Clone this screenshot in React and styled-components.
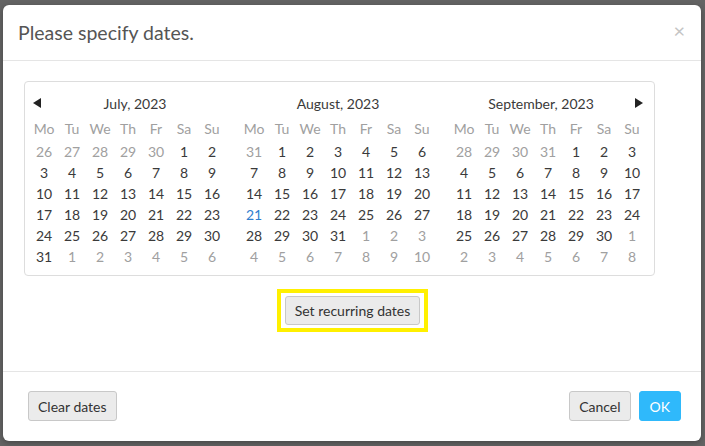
import styled, { createGlobalStyle } from "styled-components";

const GlobalStyle = createGlobalStyle`
    html, body {
        margin: 0;
        background: #646464;
        font-family: Lato, "Open Sans", sans-serif;
    }
`;

const Backdrop = styled.div`
    padding: 5px 4px 5px 3px;
    height: 446px;
    box-sizing: border-box;
`;

const Modal = styled.div`
    width: 698px;
    height: 436px;
    background: #fff;
    border-radius: 6px;
    display: flex;
    flex-direction: column;
    box-shadow: 0 2px 6px rgba(0, 0, 0, 0.3);
`;

const Header = styled.div`
    display: flex;
    align-items: center;
    justify-content: space-between;
    padding: 15px 15px 15px 15px;
    border-bottom: 1px solid #e5e5e5;
`;

const Title = styled.h4`
    margin: 0;
    font-size: 19.5px;
    line-height: 25px;
    font-weight: 400;
    color: #555;
`;

const Close = styled.span`
    font-size: 20px;
    line-height: 20px;
    color: #c4c4c4;
    margin-right: 1px;
    margin-top: -6px;
`;

const Body = styled.div`
    flex: 1;
    padding: 20px 0 0 21px;
    display: flex;
    flex-direction: column;
`;

const CalendarBox = styled.div`
    align-self: flex-start;
    display: flex;
    gap: 14px;
    padding: 8px 8px 8px 5px;
    border: 1px solid #ddd;
    border-radius: 4px;
`;

const Month = styled.div`
    width: 196px;
`;

const MonthHead = styled.div`
    display: flex;
    align-items: center;
    height: 26px;
`;

const Arrow = styled.span`
    width: 14px;
    display: flex;
    justify-content: center;
`;

const MonthName = styled.div`
    flex: 1;
    text-align: center;
    font-size: 14px;
    color: #3a3a3a;
`;

const Grid = styled.div`
    display: grid;
    grid-template-columns: repeat(7, 28px);
    grid-template-rows: 25px repeat(6, 21px);
    align-items: center;
`;

const Cell = styled.span`
    text-align: center;
    font-size: 14px;
    line-height: 21px;
    color: ${props => props.today ? "#2f7fcf" : props.muted ? "#a0a0a0" : "#3a3a3a"};
`;

const RecurRow = styled.div`
    display: flex;
    justify-content: center;
    margin-top: 13px;
    padding-right: 20px;
`;

const Highlight = styled.div`
    border: 4px solid #fff000;
    padding: 3px 4px;
`;

const Button = styled.button`
    height: ${props => props.tall ? "30px" : "29px"};
    padding: 0 ${props => props.pad || 9}px;
    font-family: Lato, "Open Sans", sans-serif;
    font-size: 14px;
    color: ${props => props.primary ? "#fff" : "#333"};
    background: ${props => props.primary ? "#2fb9fb" : "#ebebeb"};
    border: 1px solid ${props => props.primary ? "#2fb9fb" : "#c8c8c8"};
    border-radius: 3px;
    cursor: pointer;
`;

const Footer = styled.div`
    display: flex;
    align-items: center;
    padding: 19px 20px 20px 25px;
    border-top: 1px solid #e5e5e5;
`;

const Spacer = styled.div`
    flex: 1;
`;

const Actions = styled.div`
    display: flex;
    gap: 8px;
`;

const dayNames = ["Mo", "Tu", "We", "Th", "Fr", "Sa", "Su"];

const buildDays = (year, month) => {
    const first = new Date(year, month, 1);
    const offset = (first.getDay() + 6) % 7;
    const days = [];
    for (let i = 0; i < 42; i++) {
        const d = new Date(year, month, 1 - offset + i);
        days.push({
            n: d.getDate(),
            muted: d.getMonth() !== month,
            today: month === 7 && d.getMonth() === 7 && d.getDate() === 21,
        });
    }
    return days;
};

const months = [
    { name: "July, 2023", m: 6, prev: true },
    { name: "August, 2023", m: 7 },
    { name: "September, 2023", m: 8, next: true },
];

const LeftTri = () => (
    <svg width="8" height="10" viewBox="0 0 8 10"><path d="M8 0 L0 5 L8 10 Z" fill="#222" /></svg>
);
const RightTri = () => (
    <svg width="8" height="10" viewBox="0 0 8 10"><path d="M0 0 L8 5 L0 10 Z" fill="#222" /></svg>
);

const App = () => {
    return (
        <>
            <GlobalStyle />
            <Backdrop>
                <Modal>
                    <Header>
                        <Title>Please specify dates.</Title>
                        <Close>×</Close>
                    </Header>
                    <Body>
                        <CalendarBox>
                            {months.map(mo => (
                                <Month key={mo.name}>
                                    <MonthHead>
                                        {mo.prev && <Arrow><LeftTri /></Arrow>}
                                        <MonthName>{mo.name}</MonthName>
                                        {mo.next && <Arrow><RightTri /></Arrow>}
                                    </MonthHead>
                                    <Grid>
                                        {dayNames.map(d => <Cell key={d} muted>{d}</Cell>)}
                                        {buildDays(2023, mo.m).map((d, i) => (
                                            <Cell key={i} muted={d.muted} today={d.today}>{d.n}</Cell>
                                        ))}
                                    </Grid>
                                </Month>
                            ))}
                        </CalendarBox>
                        <RecurRow>
                            <Highlight>
                                <Button>Set recurring dates</Button>
                            </Highlight>
                        </RecurRow>
                    </Body>
                    <Footer>
                        <Button tall>Clear dates</Button>
                        <Spacer />
                        <Actions>
                            <Button tall>Cancel</Button>
                            <Button tall primary pad={10}>OK</Button>
                        </Actions>
                    </Footer>
                </Modal>
            </Backdrop>
        </>
    );
};

export default App;
